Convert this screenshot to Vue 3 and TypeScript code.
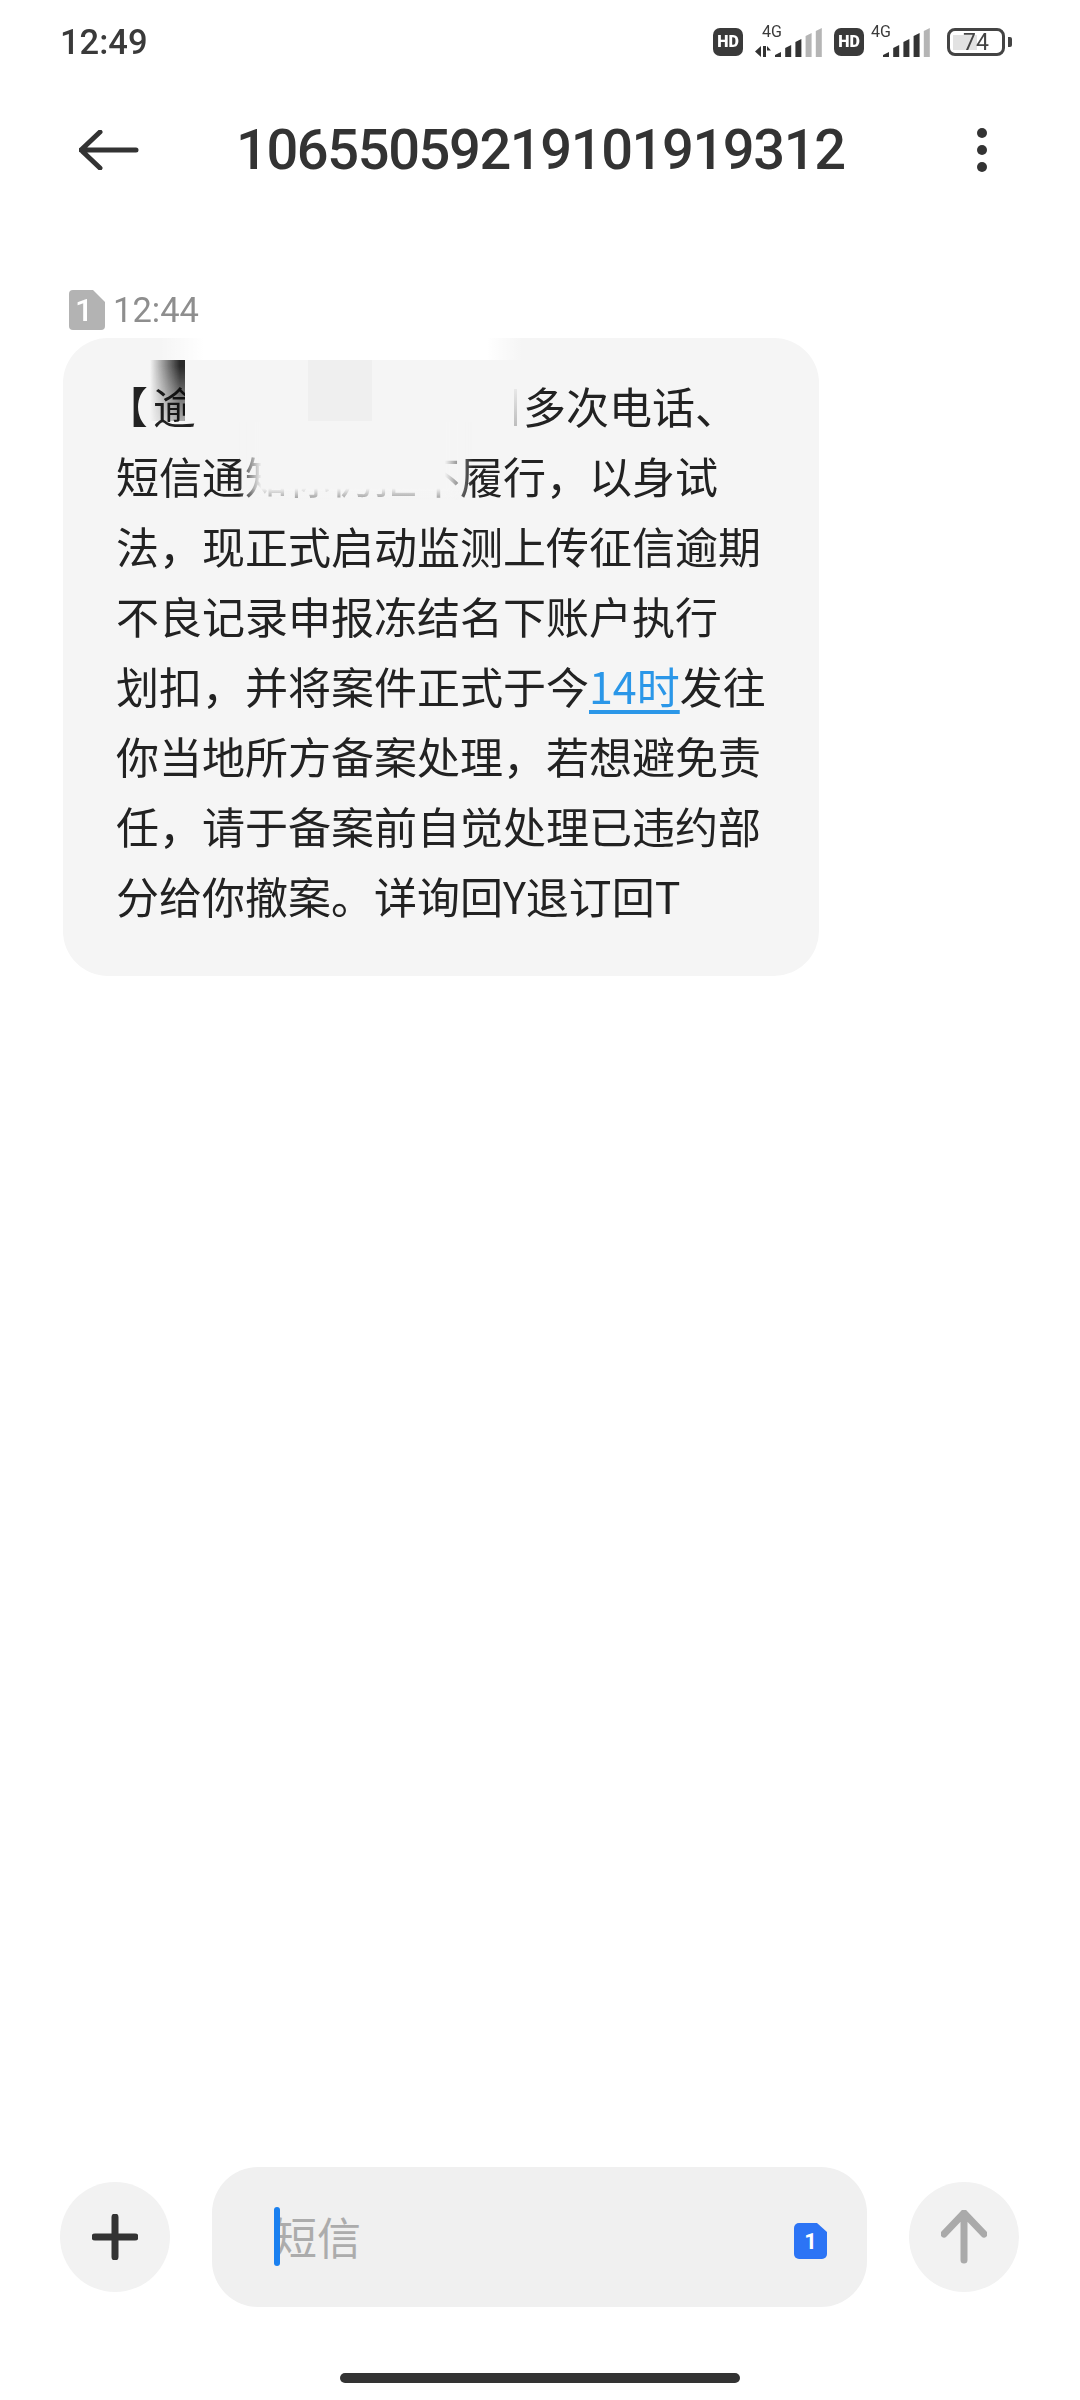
<template>
  <div class="screen">
    <div class="status">
      <span class="clock">12:49</span>
      <div class="status-icons">
        <span class="hd">HD</span>
        <div class="sim">
          <span class="net net-a">4G</span>
          <svg width="67" height="30" viewBox="0 0 67 30">
            <path d="M6 19 L0 24.5 L6 30Z M8 19 H11 V30 H8Z M12 19 L16 23.5 H12Z" fill="#333" />
            <path v-for="(bar, i) in simBars(20, 1)" :key="i" :d="bar.d" :fill="bar.fill" />
          </svg>
        </div>
        <span class="hd">HD</span>
        <div class="sim sim-b">
          <span class="net">4G</span>
          <svg width="59" height="30" viewBox="0 0 59 30">
            <path v-for="(bar, i) in simBars(12, 0)" :key="i" :d="bar.d" :fill="bar.fill" />
          </svg>
        </div>
        <div class="battery">
          <div class="battery-body">
            <span class="battery-fill"></span>
            <span class="battery-num">74</span>
          </div>
          <span class="battery-tip"></span>
        </div>
      </div>
    </div>

    <header class="topbar">
      <button class="icon-btn">
        <svg width="60" height="40" viewBox="0 0 60 40">
          <path d="M2 20 H57 M21 2 L2 20 L21 38" fill="none" stroke="#333" stroke-width="5" stroke-linecap="round" stroke-linejoin="round" />
        </svg>
      </button>
      <h1 class="title">{{ phone }}</h1>
      <button class="icon-btn more">
        <span></span><span></span><span></span>
      </button>
    </header>

    <main class="thread">
      <div class="meta">
        <svg width="36" height="40" viewBox="0 0 36 40">
          <path d="M4 0 H24 L36 12 V36 A4 4 0 0 1 32 40 H4 A4 4 0 0 1 0 36 V4 A4 4 0 0 1 4 0Z" fill="#b3b3b3" />
        </svg>
        <span class="meta-num">1</span>
        <span class="meta-time">12:44</span>
      </div>
      <div class="bubble">
        <p class="line"><span class="bracket">【</span>逾<span class="gap"></span>多次电话、</p>
        <p v-for="(line, i) in lines" :key="i" class="line">
          {{ line.before }}<a v-if="line.link" class="link">{{ line.link }}</a>{{ line.after }}
        </p>
        <div class="band"></div>
        <div class="cover"></div>
        <div class="dark"></div>
        <div class="patch"></div>
        <div class="tick"></div>
        <div class="fade"></div>
      </div>
    </main>

    <footer class="composer">
      <button class="round">
        <svg width="46" height="46" viewBox="0 0 46 46">
          <path d="M23 3 V43 M3 23 H43" stroke="#333" stroke-width="7" stroke-linecap="round" />
        </svg>
      </button>
      <div class="input">
        <span class="caret"></span>
        <span class="placeholder">短信</span>
        <span class="sim-tag">
          <svg width="33" height="36" viewBox="0 0 33 36">
            <path d="M5 0 H23 L33 9 V31 A5 5 0 0 1 28 36 H5 A5 5 0 0 1 0 31 V5 A5 5 0 0 1 5 0Z" fill="#2c74f5" />
          </svg>
          <span class="sim-num">1</span>
        </span>
      </div>
      <button class="round">
        <svg width="46" height="54" viewBox="0 0 46 54">
          <path d="M23 3 V50 M3 24 L23 3 L43 24" fill="none" stroke="#aaa" stroke-width="7" stroke-linecap="round" stroke-linejoin="round" />
        </svg>
      </button>
    </footer>
    <div class="home-wrap"><span class="home"></span></div>
  </div>
</template>

<script setup lang="ts">
const phone = '10655059219101919312'

const barTops = [25, 18, 12, 6, 1]

// dimmed: how many bars besides the last one are grey
const simBars = (startX: number, dimmed: number) =>
  barTops.map((top, i) => {
    const x = startX + i * 10.2
    const fill = i >= 4 - dimmed ? '#b5b5b5' : '#333'
    return { d: `M${x} ${top + 3} L${x + 6} ${top} V30 H${x}Z`, fill }
  })

const lines = [
  { before: '短信通知你仍拒不履行，以身试' },
  { before: '法，现正式启动监测上传征信逾期' },
  { before: '不良记录申报冻结名下账户执行' },
  { before: '划扣，并将案件正式于今', link: '14时', after: '发往' },
  { before: '你当地所方备案处理，若想避免责' },
  { before: '任，请于备案前自觉处理已违约部' },
  { before: '分给你撤案。详询回Y退订回T' },
]
</script>

<style>
html,
body {
  margin: 0;
  background: #fff;
}
</style>

<style scoped>
.screen {
  width: 1080px;
  height: 2400px;
  display: flex;
  flex-direction: column;
  background: #fff;
  color: #333;
  font-family: Roboto, "Noto Sans CJK SC", sans-serif;
  overflow: hidden;
}

.status {
  height: 84px;
  padding: 0 68px 0 60px;
  display: flex;
  align-items: center;
  justify-content: space-between;
  box-sizing: border-box;
}

.clock {
  font-size: 34.5px;
  font-weight: 500;
  color: #3a3a3a;
}

.status-icons {
  display: flex;
  align-items: center;
  gap: 12px;
}

.hd {
  width: 30px;
  height: 28px;
  border-radius: 7px;
  background: #3a3a3a;
  color: #fff;
  font-size: 16px;
  font-weight: 900;
  line-height: 28px;
  text-align: center;
}

.sim {
  position: relative;
  display: flex;
  height: 30px;
}

.sim-b {
  margin-left: -5px;
}

.net {
  position: absolute;
  left: 0;
  top: -3px;
  font-size: 16px;
  line-height: 16px;
  color: #3a3a3a;
}

.net-a {
  left: 7px;
}

.battery {
  display: flex;
  align-items: center;
  gap: 3px;
  margin-left: 5px;
}

.battery-body {
  position: relative;
  width: 58px;
  height: 28px;
  box-sizing: border-box;
  border: 3px solid #444;
  border-radius: 8px;
  overflow: hidden;
}

.battery-fill {
  position: absolute;
  left: 3px;
  top: 4px;
  bottom: 3px;
  width: 24px;
  background: #e2e2e2;
}

.battery-num {
  position: absolute;
  inset: 0;
  font-size: 23px;
  line-height: 23px;
  text-align: center;
  color: #444;
}

.battery-tip {
  width: 4px;
  height: 10px;
  border-radius: 0 2px 2px 0;
  background: #444;
}

.topbar {
  height: 130px;
  padding: 2px 88px 0 79px;
  box-sizing: border-box;
  display: flex;
  align-items: center;
}

.icon-btn {
  padding: 0;
  border: 0;
  background: none;
  display: flex;
}

.title {
  margin: 0 auto 0 97px;
  font-size: 56px;
  font-weight: 500;
  color: #333;
  letter-spacing: -1.4px;
}

.more {
  flex-direction: column;
  gap: 7px;
  padding: 0 5px;
}

.more span {
  width: 10px;
  height: 10px;
  border-radius: 50%;
  background: #333;
}

.thread {
  flex: 1;
  padding: 76px 0 0 63px;
}

.meta {
  position: relative;
  display: flex;
  align-items: center;
  gap: 8px;
  margin: 0 0 8px 6px;
  height: 40px;
}

.meta-num {
  position: absolute;
  left: 0;
  width: 30px;
  text-align: center;
  font-size: 32px;
  font-weight: 500;
  color: #fff;
}

.meta-time {
  font-size: 34.5px;
  color: #8e8e8e;
}

.bubble {
  position: relative;
  width: 756px;
  height: 638px;
  padding: 32px 0 0 53px;
  box-sizing: border-box;
  border-radius: 45px;
  background: #f5f5f5;
}

.line {
  margin: 0;
  height: 70px;
  line-height: 70px;
  font-size: 43px;
  color: #222;
  white-space: nowrap;
  font-family: "Noto Sans CJK SC", Roboto, sans-serif;
}

.bracket {
  margin: 0 5px 0 -11px;
}

.gap {
  display: inline-block;
  width: 327px;
}

.link {
  color: #2b97e8;
  text-decoration: underline;
  text-underline-offset: 6px;
}

/* retouched redaction over the first two lines */
.band {
  position: absolute;
  left: 97px;
  top: -1px;
  width: 363px;
  height: 23px;
  background: linear-gradient(to right, transparent, #fff 12%, #fff 90%, transparent);
}

.cover {
  position: absolute;
  left: 122px;
  top: 22px;
  width: 30px;
  height: 62px;
  background: #f5f5f5;
}

.dark {
  position: absolute;
  left: 87px;
  top: 22px;
  width: 35px;
  height: 61px;
  background: linear-gradient(to right, transparent, #2a2a2a 85%);
  mask-image: linear-gradient(to bottom, #000 10%, rgba(0, 0, 0, 0.35));
  mix-blend-mode: multiply;
}

.patch {
  position: absolute;
  left: 245px;
  top: 22px;
  width: 64px;
  height: 61px;
  background: #efefef;
}

.tick {
  position: absolute;
  left: 451px;
  top: 51px;
  width: 3px;
  height: 37px;
  background: linear-gradient(to bottom, #e8e8e8, #bdbdbd);
}

.fade {
  position: absolute;
  left: 175px;
  top: 84px;
  width: 235px;
  height: 78px;
  background: linear-gradient(to bottom, #f5f5f5 85%, rgba(245, 245, 245, 0.55));
  mask-image: linear-gradient(to right, transparent, #000 10%, #000 88%, transparent);
}

.composer {
  height: 140px;
  padding: 0 0 0 60px;
  display: flex;
  align-items: center;
  gap: 42px;
}

.round {
  width: 110px;
  height: 110px;
  padding: 0;
  border: 0;
  border-radius: 50%;
  background: #f2f2f2;
  display: flex;
  align-items: center;
  justify-content: center;
  flex: none;
}

.input {
  position: relative;
  width: 655px;
  height: 140px;
  border-radius: 46px;
  background: #f0f0f0;
  display: flex;
  align-items: center;
  padding: 0 0 2px 61px;
  box-sizing: border-box;
}

.caret {
  position: absolute;
  left: 62px;
  top: 40px;
  width: 6px;
  height: 59px;
  border-radius: 3px;
  background: #1a80f0;
}

.placeholder {
  font-size: 44px;
  color: #acacac;
  font-family: "Noto Sans CJK SC", sans-serif;
}

.sim-tag {
  position: absolute;
  left: 582px;
  top: 56px;
  display: flex;
}

.sim-num {
  position: absolute;
  left: 0;
  top: 0;
  width: 33px;
  line-height: 38px;
  text-align: center;
  font-size: 22px;
  font-weight: 700;
  color: #fff;
}

.home-wrap {
  height: 93px;
  display: flex;
  justify-content: center;
  align-items: flex-start;
  padding-top: 66px;
  box-sizing: border-box;
}

.home {
  width: 400px;
  height: 10px;
  border-radius: 5px;
  background: #333;
}
</style>
